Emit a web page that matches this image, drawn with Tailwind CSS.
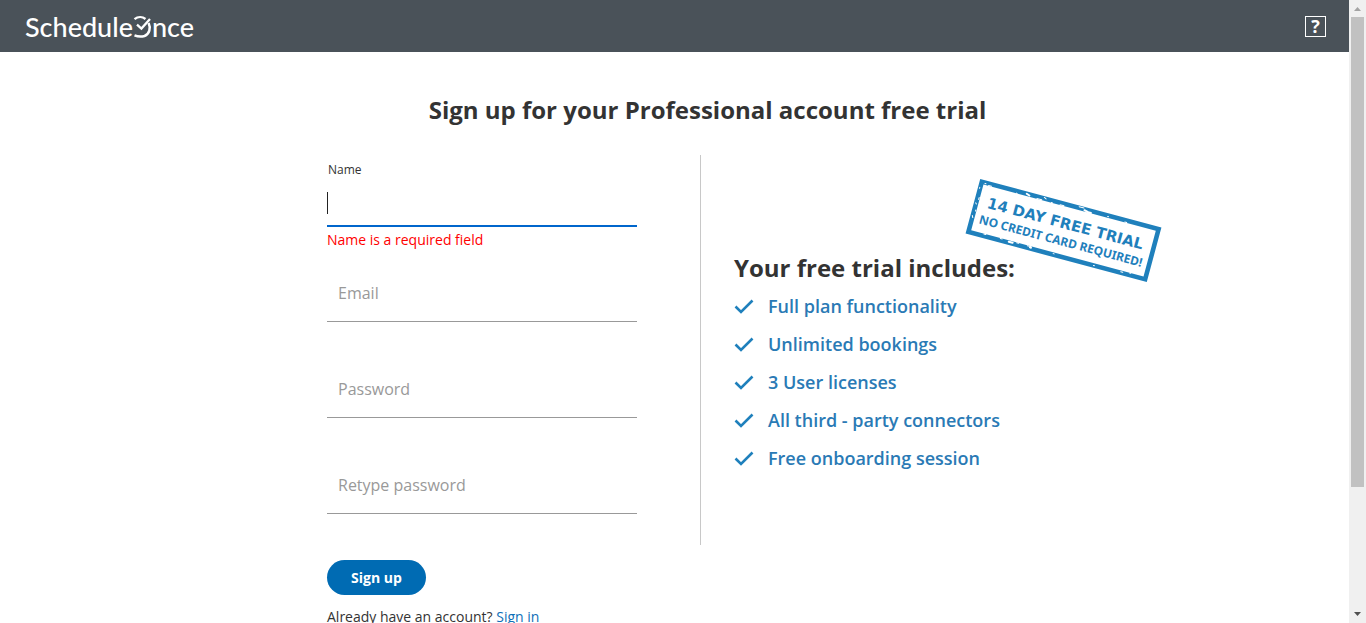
<!DOCTYPE html>
<html lang="en">
<head>
<meta charset="utf-8">
<title>ScheduleOnce - Sign up</title>
<script src="https://cdn.jsdelivr.net/npm/@tailwindcss/browser@4"></script>
</head>
<body class="flex h-screen overflow-hidden bg-white font-['Open_Sans',sans-serif] text-[#333]">
<div class="min-w-0 flex-1 overflow-hidden">
  <header class="flex h-[52px] items-center justify-between bg-[#4a5259] pr-[23px] pl-[25px] text-white">
    <a href="#" aria-label="ScheduleOnce" class="flex items-center pt-0.5 font-[Lato,sans-serif] text-[27px] leading-8 font-medium">
      <span>Schedule</span>
      <svg class="h-8 w-[19px]" viewBox="0 0 19 32" fill="none" stroke="currentColor" aria-hidden="true">
        <path d="M1.5 8.2C5 5.4 9.5 5.6 12.5 8" stroke-width="2.3"/>
        <path d="M15.6 12C18 17 16.5 23.2 11.5 25C8 26 4.5 25.6 1.5 24.4" stroke-width="2.5"/>
        <path d="M4 13.6L8.4 17.6L17 8" stroke-width="2.3"/>
      </svg>
      <span>nce</span>
    </a>
    <button aria-label="Help" class="flex size-[21px] items-center justify-center border border-white text-lg leading-none font-bold">?</button>
  </header>

  <main class="pl-[327px]">
    <h1 class="w-[761px] pt-10 text-center text-2xl leading-9 font-bold">Sign up for your Professional account free trial</h1>
    <div class="flex pt-[27px]">
      <form class="w-[310px]">
        <div class="flex h-[119px] flex-col">
          <label for="name" class="h-8 pt-1.5 pl-px text-xs leading-[18px]">Name</label>
          <div class="relative">
            <input id="name" type="text" class="block h-10 w-full border-b-2 border-[#0066cc] caret-transparent outline-none" aria-describedby="name-error">
            <span class="absolute top-[5px] left-0 h-[22px] w-px bg-[#222]"></span>
          </div>
          <p id="name-error" class="pt-[3px] text-sm leading-5 text-[#f00]">Name is a required field</p>
        </div>
        <div class="flex flex-col gap-12">
          <input type="email" aria-label="Email" placeholder="Email" class="block h-12 w-full border-b border-[#999] px-[11px] pb-2.5 text-base outline-none placeholder:text-[#999]">
          <input type="password" aria-label="Password" placeholder="Password" class="block h-12 w-full border-b border-[#999] px-[11px] pb-2.5 text-base outline-none placeholder:text-[#999]">
          <input type="password" aria-label="Retype password" placeholder="Retype password" class="block h-12 w-full border-b border-[#999] px-[11px] pb-2.5 text-base outline-none placeholder:text-[#999]">
        </div>
        <button type="button" class="mt-[46px] block h-[35px] w-[99px] rounded-full bg-[#006bb3] text-sm font-bold text-white">Sign up</button>
        <p class="pt-3 text-sm leading-5">Already have an account? <a href="#" class="text-[#0e6fb8]">Sign in</a></p>
      </form>

      <section class="relative ml-[63px] h-[390px] border-l border-[#c8c8c8] pt-[95px] pl-[33px]">
        <svg class="absolute top-[19px] left-[260px] h-[112px] w-[206px]" viewBox="0 0 206 112" role="img" aria-label="14 day free trial, no credit card required">
          <g transform="translate(102.5 56.5) rotate(15)" fill="#1f80bc">
            <rect x="-91.5" y="-26" width="183" height="52" fill="none" stroke="#1f80bc" stroke-width="4.6"/>
            <g font-weight="bold" text-anchor="middle">
              <text x="0" y="-2" font-size="15" font-family="DejaVu Sans, Verdana, sans-serif">14 DAY FREE TRIAL</text>
              <text x="0" y="15" font-size="12" font-family="Noto Sans, Tahoma, sans-serif">NO CREDIT CARD REQUIRED!</text>
            </g>
            <g stroke="#fff" fill="none" stroke-linecap="round">
              <path stroke-width="2" d="M-45-26l3 1M15-25l4 1M18-24l4 0"/>
              <path stroke-width="1" d="M-88-25h1M-84-24l3 0M-55-24l1 1M-34-24l5 0M-27-27l2 1M-10-24l4 0M-19-24h1M9-27l5 0M39-25h1M57-24h2M-92-20v1M-90-10v2M-92-4l1 1M-90 3v1M-92 9l1 2M-76 24l2 0M-59 24h2M-42 24h2M-31 24l4 0M-4 25h1M38 26h1M66 25h2M75 24h1"/>
              <path stroke-width="2" d="M-50 25l4 0M-28 25h1"/>
            </g>
          </g>
        </svg>
        <h2 class="text-2xl leading-9 font-bold">Your free trial includes:</h2>
        <ul class="pt-px text-lg leading-[38px] font-semibold whitespace-nowrap text-[#2a7ab5]">
          <li class="flex items-center gap-3.5"><svg class="h-5 w-5" viewBox="0 0 20 20" fill="none" stroke="#1f80bc" stroke-width="2.6" aria-hidden="true"><path d="M1.5 10.5L7 16L18.5 4.5"/></svg>Full plan functionality</li>
          <li class="flex items-center gap-3.5"><svg class="h-5 w-5" viewBox="0 0 20 20" fill="none" stroke="#1f80bc" stroke-width="2.6" aria-hidden="true"><path d="M1.5 10.5L7 16L18.5 4.5"/></svg>Unlimited bookings</li>
          <li class="flex items-center gap-3.5"><svg class="h-5 w-5" viewBox="0 0 20 20" fill="none" stroke="#1f80bc" stroke-width="2.6" aria-hidden="true"><path d="M1.5 10.5L7 16L18.5 4.5"/></svg>3 User licenses</li>
          <li class="flex items-center gap-3.5"><svg class="h-5 w-5" viewBox="0 0 20 20" fill="none" stroke="#1f80bc" stroke-width="2.6" aria-hidden="true"><path d="M1.5 10.5L7 16L18.5 4.5"/></svg>All third - party connectors</li>
          <li class="flex items-center gap-3.5"><svg class="h-5 w-5" viewBox="0 0 20 20" fill="none" stroke="#1f80bc" stroke-width="2.6" aria-hidden="true"><path d="M1.5 10.5L7 16L18.5 4.5"/></svg>Free onboarding session</li>
        </ul>
      </section>
    </div>
  </main>
</div>
<div class="flex w-[17px] shrink-0 flex-col items-center bg-[#f0f0f0]" aria-hidden="true">
  <svg class="h-[17px] w-[17px] shrink-0" viewBox="0 0 17 17"><path d="M5 11L8.5 7L12 11Z" fill="#a3a3a3"/></svg>
  <div class="h-[470px] w-[13px] bg-[#c1c1c1]"></div>
  <svg class="mt-auto h-[17px] w-[17px] shrink-0" viewBox="0 0 17 17"><path d="M5 6L8.5 10L12 6Z" fill="#505050"/></svg>
</div>
</body>
</html>
